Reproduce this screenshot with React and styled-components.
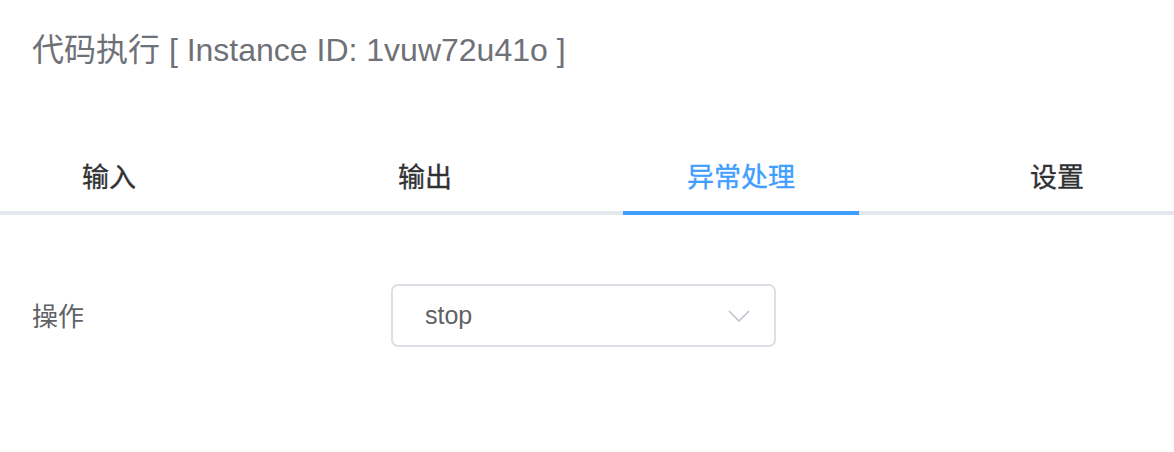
import React, { useState } from "react";
import styled, { createGlobalStyle } from "styled-components";

const Global = createGlobalStyle`
  html, body { margin: 0; padding: 0; background: #fff; }
  body {
    font-family: "Liberation Sans", "Noto Sans CJK SC", sans-serif;
    -webkit-font-smoothing: antialiased;
  }
`;

const Page = styled.div`
  width: 1174px;
  height: 452px;
  overflow: hidden;
  background: #fff;
`;

const Header = styled.div`
  padding: 24px 32px 0;
`;

const Title = styled.h1`
  margin: 0;
  font-size: 32px;
  line-height: 52px;
  font-weight: 400;
  color: #6e7177;
`;

const TabNav = styled.div`
  margin-top: 63px;
  position: relative;
  border-bottom: 4px solid #e4e7ed;
`;

const TabList = styled.div`
  display: grid;
  grid-template-columns: repeat(4, 236px);
  column-gap: 80px;
  margin-left: -9px;
`;

const Tab = styled.div`
  position: relative;
  height: 72px;
  display: flex;
  align-items: center;
  justify-content: center;
  font-family: "Noto Sans CJK SC", sans-serif;
  font-size: 27px;
  font-weight: 400;
  -webkit-text-stroke: 0.35px currentColor;
  color: ${(p) => (p.$active ? "#409eff" : "#303133")};
  cursor: pointer;

  &::after {
    content: "";
    display: ${(p) => (p.$active ? "block" : "none")};
    position: absolute;
    left: 0;
    right: 0;
    bottom: -4px;
    height: 4px;
    background: #409eff;
  }
`;

const Form = styled.div`
  padding: 69px 32px 0;
`;

const FormRow = styled.div`
  display: flex;
  align-items: center;
`;

const Label = styled.div`
  width: 359px;
  margin-top: -3px;
  font-family: "Noto Sans CJK SC", sans-serif;
  font-size: 26px;
  color: #606266;
`;

const Select = styled.div`
  box-sizing: border-box;
  width: 385px;
  height: 63px;
  border: 2px solid #dcdfe6;
  border-radius: 7px;
  display: flex;
  align-items: center;
  justify-content: space-between;
  padding: 0 24px 0 32px;
  cursor: pointer;
`;

const SelectValue = styled.span`
  font-size: 25px;
  color: #606266;
`;

const Chevron = () => (
  <svg width="22" height="12" viewBox="0 0 22 12" fill="none">
    <polyline points="1,1 11,11 21,1" stroke="#c0c4cc" strokeWidth="1.6" />
  </svg>
);

const tabs = ["输入", "输出", "异常处理", "设置"];

export default function App() {
  const [active, setActive] = useState(2);
  return (
    <Page>
      <Global />
      <Header>
        <Title>代码执行 [ Instance ID: 1vuw72u41o ]</Title>
      </Header>
      <TabNav>
        <TabList>
          {tabs.map((t, i) => (
            <Tab key={t} $active={i === active} onClick={() => setActive(i)}>
              {t}
            </Tab>
          ))}
        </TabList>
      </TabNav>
      <Form>
        <FormRow>
          <Label>操作</Label>
          <Select>
            <SelectValue>stop</SelectValue>
            <Chevron />
          </Select>
        </FormRow>
      </Form>
    </Page>
  );
}
